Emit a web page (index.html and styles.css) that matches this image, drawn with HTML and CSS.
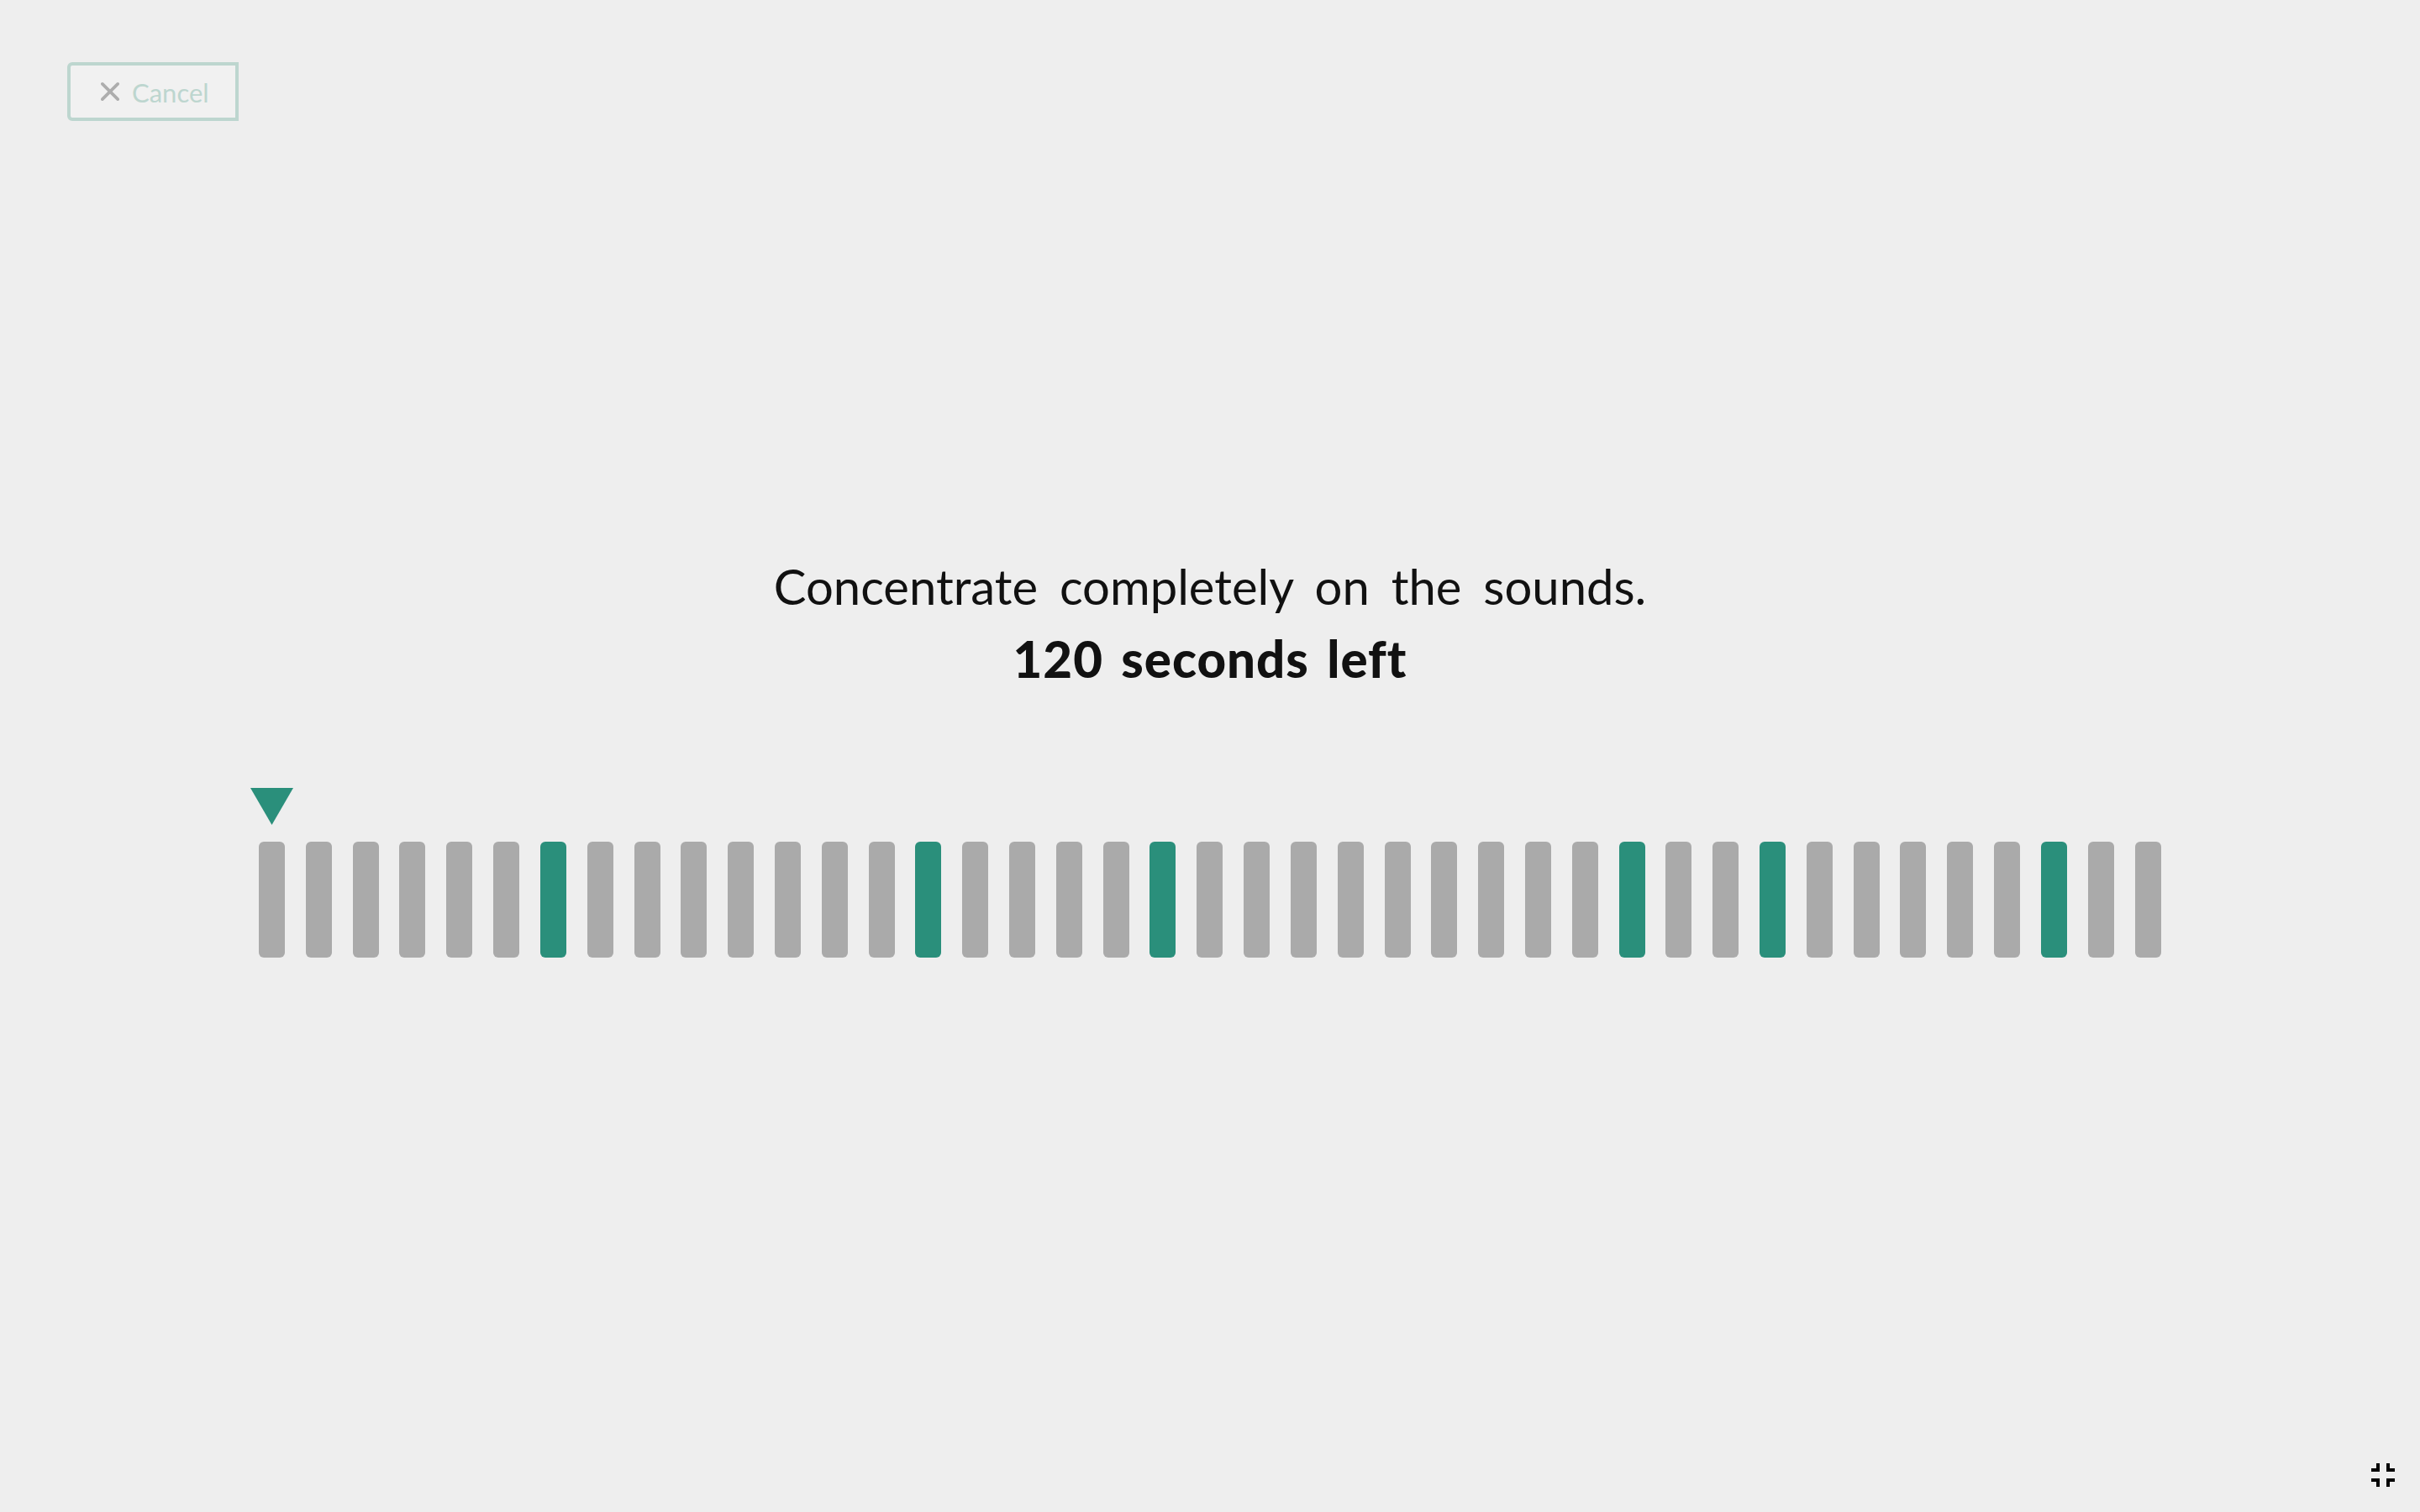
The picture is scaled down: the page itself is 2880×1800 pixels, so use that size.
FILE: index.html
```html
<!DOCTYPE html>
<html lang="en">
<head>
<meta charset="utf-8">
<title>Concentrate</title>
<link rel="stylesheet" href="styles.css">
</head>
<body>
<div class="page">
  <header class="topbar">
    <button class="cancel" type="button">
      <svg class="cancel-icon" viewBox="0 0 24 24" aria-hidden="true"><path d="M2 2 L22 22 M22 2 L2 22"/></svg>
      <span class="cancel-label">Cancel</span>
    </button>
  </header>
  <main class="stage">
    <div class="message">
      <p class="line">Concentrate completely on the sounds.</p>
      <p class="line line-strong">120 seconds left</p>
    </div>
    <div class="timeline">
      <svg class="marker" viewBox="0 0 51 44" aria-hidden="true"><polygon points="0,0 51,0 25.5,44"/></svg>
      <div class="bars">
        <span class="bar"></span><span class="bar"></span><span class="bar"></span><span class="bar"></span><span class="bar"></span><span class="bar"></span>
        <span class="bar bar-on"></span>
        <span class="bar"></span><span class="bar"></span><span class="bar"></span><span class="bar"></span><span class="bar"></span><span class="bar"></span><span class="bar"></span>
        <span class="bar bar-on"></span>
        <span class="bar"></span><span class="bar"></span><span class="bar"></span><span class="bar"></span>
        <span class="bar bar-on"></span>
        <span class="bar"></span><span class="bar"></span><span class="bar"></span><span class="bar"></span><span class="bar"></span><span class="bar"></span><span class="bar"></span><span class="bar"></span><span class="bar"></span>
        <span class="bar bar-on"></span>
        <span class="bar"></span><span class="bar"></span>
        <span class="bar bar-on"></span>
        <span class="bar"></span><span class="bar"></span><span class="bar"></span><span class="bar"></span><span class="bar"></span>
        <span class="bar bar-on"></span>
        <span class="bar"></span><span class="bar"></span>
      </div>
    </div>
  </main>
  <svg class="fullscreen" viewBox="0 0 24 24" aria-hidden="true"><path d="M5 16h3v3h2v-5H5v2zm3-8H5v2h5V5H8v3zm6 11h2v-3h3v-2h-5v5zm2-11V5h-2v5h5V8h-3z"/></svg>
</div>
</body>
</html>
```
FILE: styles.css
```css
* { box-sizing: border-box; }
html, body { margin: 0; height: 100%; }
body { background: #eeeeee; font-family: "Lato", "Noto Sans", sans-serif; color: #111; }
.page { position: relative; height: 100vh; overflow: hidden; padding: 74px 308px 0 80px; }
.topbar { height: 69px; display: flex; align-items: flex-start; }
.cancel {
  display: flex; align-items: center; gap: 15px;
  width: 204px; height: 70px; padding: 2px 0 0 36px;
  background: #f1f1f1; border: 4px solid #bdd6cf; border-radius: 6px 0 0 6px;
  font: 400 31px "Lato", sans-serif; color: #bdd6cf;
}
.cancel-icon { width: 22px; height: 24px; flex: none; margin-top: -2px; }
.cancel-icon path { stroke: #adadad; stroke-width: 4; stroke-linecap: round; fill: none; }
.stage { margin-left: 228px; padding-top: 515px; width: 2264px; }
.message { text-align: center; margin-bottom: 112px; }
.line { margin: 0; font-size: 58px; line-height: 84px; word-spacing: 11px; position: relative; top: -2px; }
.line-strong { font-size: 60px; font-weight: 900; letter-spacing: 1px; word-spacing: 6px; top: 0; }
.marker { display: block; width: 51px; height: 44px; margin: 0 0 20px -10px; }
.marker polygon { fill: #2a8f7b; }
.bars { display: flex; justify-content: space-between; }
.bar { width: 31px; height: 138px; background: #aaaaaa; border-radius: 6px; }
.bar-on { background: #2a8f7b; }
.fullscreen { position: absolute; right: 20px; bottom: 20px; width: 48px; height: 48px; }
.fullscreen path { fill: #000; }
```
